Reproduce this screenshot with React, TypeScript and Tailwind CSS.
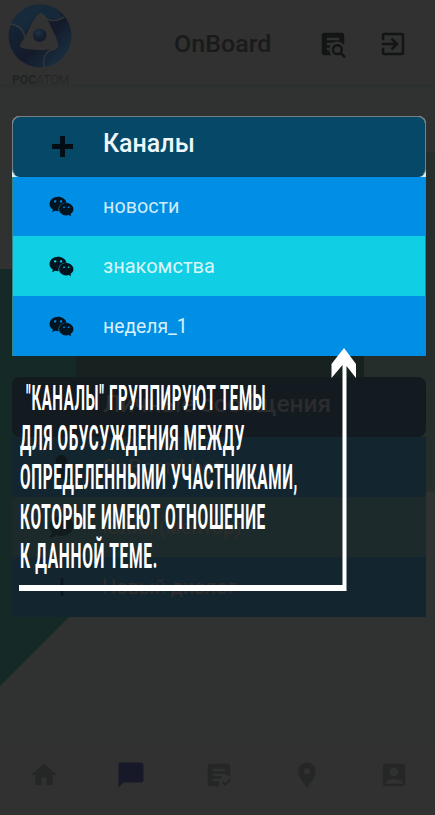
import { useLayoutEffect, useRef, useState } from "react";
import type { ReactNode } from "react";
import { MdAccountBox, MdChatBubble, MdExitToApp, MdHome, MdLocationOn } from "react-icons/md";
import { FaComment, FaUser, FaWeixin } from "react-icons/fa";

function FitText({ children, width, className = "" }: { children: ReactNode; width: number; className?: string }) {
  const ref = useRef<HTMLSpanElement>(null);
  const [scale, setScale] = useState(1);
  useLayoutEffect(() => {
    if (ref.current) setScale(width / ref.current.offsetWidth);
  }, [width]);
  return (
    <span ref={ref} className={`inline-block origin-left whitespace-nowrap ${className}`} style={{ transform: `scaleX(${scale})` }}>
      {children}
    </span>
  );
}

function Logo() {
  return (
    <svg viewBox="0 0 64 64" className="block h-16 w-16">
      <defs>
        <linearGradient id="blade" x1="0" y1="0" x2="1" y2="1">
          <stop offset="0" stopColor="#152a3b" />
          <stop offset="0.55" stopColor="#141a2a" />
          <stop offset="1" stopColor="#1b3648" />
        </linearGradient>
        <radialGradient id="core" cx="0.4" cy="0.3">
          <stop offset="0" stopColor="#1d3347" />
          <stop offset="1" stopColor="#151c2c" />
        </radialGradient>
      </defs>
      <circle cx="32" cy="32" r="31.5" fill="url(#blade)" />
      <path d="M8 12Q18 1 32 .5Q47 1 55 13Q45 20 33 9Q23 16 16 31Q12 21 3 20Z" fill="#172d3e" opacity=".7" />
      <path d="M33 9C37 10 40 16 43 23C47 31 51 38 50 44C46 46 41 45 36 46C29 46 18 46 12 43C12 38 16 36 19 29C23 21 27 11 33 9Z" fill="#323232" />
      <path d="M32 9Q43 22 56 13M17 33Q14 21 2 20M48 45Q34 46 36 63" fill="none" stroke="#343637" strokeWidth="1.3" />
      <circle cx="31.8" cy="31.3" r="6.7" fill="url(#core)" />
    </svg>
  );
}

function TextBoxSearch() {
  return (
    <svg viewBox="0 0 24 24" className="h-[30px] w-[30px]" fill="currentColor">
      <path d="M15.5,12C18,12 20,14 20,16.5C20,17.38 19.75,18.21 19.31,18.9L22.39,22L21,23.39L17.88,20.32C17.19,20.75 16.37,21 15.5,21C13,21 11,19 11,16.5C11,14 13,12 15.5,12M15.5,14A2.5,2.5 0 0,0 13,16.5A2.5,2.5 0 0,0 15.5,19A2.5,2.5 0 0,0 18,16.5A2.5,2.5 0 0,0 15.5,14M7,15V17H9C9.14,18.55 9.8,19.94 10.81,21H5C3.89,21 3,20.1 3,19V5C3,3.89 3.89,3 5,3H19A2,2 0 0,1 21,5V13.03C19.85,11.21 17.82,10 15.5,10C14.23,10 13.04,10.37 12.04,11H7V13H10C9.64,13.6 9.34,14.28 9.17,15H7M17,9V7H7V9H17Z" />
    </svg>
  );
}

function TextBoxCheck() {
  return (
    <svg viewBox="0 0 24 24" className="h-[30px] w-[30px]" fill="currentColor">
      <path d="M17 21L14.25 18L15.41 16.83L17 18.41L20.59 14.82L21.75 16.23L17 21M12.8 21H5C3.89 21 3 20.11 3 19V5C3 3.89 3.89 3 5 3H19C20.11 3 21 3.89 21 5V12.8C20.12 12.29 19.09 12 18 12L17 12.08V11H7V13H14.69C14 13.55 13.24 14.2 12.8 15H7V17H12.08L12 18C12 19.09 12.29 20.12 12.8 21M17 9V7H7V9H17Z" />
    </svg>
  );
}

function Plus() {
  return (
    <svg viewBox="0 0 21 21" className="h-[21px] w-[21px]" fill="currentColor">
      <path d="M8 0h5v8h8v5h-8v8H8v-8H0V8h8z" />
    </svg>
  );
}

function Row({ icon, label, width, className }: { icon: ReactNode; label: string; width: number; className: string }) {
  return (
    <div className={`flex items-center ${className}`}>
      <div className="flex w-[90px] shrink-0 justify-center pl-[9px]">{icon}</div>
      <FitText width={width} className="text-[20px] leading-6">{label}</FitText>
    </div>
  );
}

const wechat = <FaWeixin className="-ml-[3px] h-[25px] w-[25px] text-[#02141f]" />;

const note = [
  { text: "\"КАНАЛЫ\" ГРУППИРУЮТ ТЕМЫ", width: 240, pad: "pl-[6px]" },
  { text: "ДЛЯ ОБУСУЖДЕНИЯ МЕЖДУ", width: 225, pad: "" },
  { text: "ОПРЕДЕЛЕННЫМИ УЧАСТНИКАМИ,", width: 278, pad: "" },
  { text: "КОТОРЫЕ ИМЕЮТ ОТНОШЕНИЕ", width: 246, pad: "" },
  { text: "К ДАННОЙ ТЕМЕ.", width: 138, pad: "" },
];

export default function App() {
  return (
    <div className="relative flex h-[815px] w-[435px] flex-col overflow-hidden bg-[#303231] font-['Roboto',sans-serif]">
      <svg viewBox="0 0 435 815" className="absolute inset-0 h-[815px] w-[435px]">
        <path d="M364 152H435V492H364Z" fill="#262e2c" />
        <path d="M0 269H76V610L0 686Z" fill="#152a26" />
        <path d="M76 269H364V492H76Z" fill="#17211f" />
      </svg>

      <header className="relative flex h-[84px] shrink-0 bg-[#313131] text-[#191b1b] shadow-[0_1px_3px_rgba(20,30,28,0.25)]">
        <div className="w-[84px] pl-2 pt-1">
          <div className="h-[71px]"><Logo /></div>
          <div className="h-[10px] pl-1 text-[12px] leading-[10px]">
            <FitText width={57} className="text-[#202323]"><b>РОС</b><span className="font-light">АТОМ</span></FitText>
          </div>
        </div>
        <div className="w-[234px] pl-[90px] pt-7">
          <FitText width={97} className="text-[24px] font-medium leading-8">OnBoard</FitText>
        </div>
        <div className="flex gap-[30px] pt-[29px] text-[#131414]">
          <TextBoxSearch />
          <MdExitToApp className="h-[30px] w-[30px]" />
        </div>
      </header>

      <main className="relative flex grow flex-col px-3 pt-8">
        <section className="h-[240px] w-[414px]">
          <div className="h-[61px] rounded-t-[8px] bg-[#d4eeee]">
            <div className="flex h-[61px] items-center rounded-[8px] border border-[#777f84] border-b-[#064464] bg-[#064868]">
              <div className="flex w-[90px] justify-center pl-[9px] text-[#020d14]"><Plus /></div>
              <FitText width={92} className="-mt-1.5 text-[25px] font-medium leading-8 text-[#edf6fb]">Каналы</FitText>
            </div>
          </div>
          <div className="border-x border-[#31878c]">
            <Row icon={wechat} label="новости" width={76} className="h-[59px] bg-[#008fe5] pb-px text-[#d1ebfb]" />
            <Row icon={wechat} label="знакомства" width={112} className="h-[60px] bg-[#10cee4] text-[#d9f7fb]" />
            <Row icon={wechat} label="неделя_1" width={85} className="h-[60px] bg-[#008fe5] text-[#d7effc]" />
          </div>
        </section>

        <section className="mt-[21px] w-[414px] text-[#302c2b]">
          <div className="flex h-[60px] items-center rounded-[8px] bg-[#131b20] pl-[91px]">
            <FitText width={228} className="-mt-1.5 text-[24px] font-medium leading-8 text-[#2c2c2e]">Личные сообщения</FitText>
          </div>
          <Row icon={<FaUser className="h-[24px] w-[21px] text-[#10171b]" />} label="OnBoard-bot" width={119} className="h-[60px] bg-[#132630]" />
          <Row icon={<FaComment className="h-[24px] w-[25px] text-[#111c1e]" />} label="Юлия (ментор)" width={139} className="h-[60px] bg-[#1c2a2c]" />
          <Row icon={<svg viewBox="0 0 20 20" className="h-5 w-5"><path d="M10 1V19M2 10H18" stroke="#0c151b" strokeWidth="2.5" /></svg>} label="Новый диалог" width={134} className="h-[60px] bg-[#132630]" />
        </section>
      </main>

      <footer className="relative grid h-[69px] w-[438px] shrink-0 grid-cols-5 justify-items-center bg-[#313131] pt-[14px] text-[#242726]">
        <MdHome className="h-[30px] w-[30px]" />
        <MdChatBubble className="h-[30px] w-[30px] text-[#171929]" />
        <TextBoxCheck />
        <MdLocationOn className="h-[30px] w-[30px]" />
        <MdAccountBox className="h-[30px] w-[30px]" />
      </footer>

      <div className="absolute left-[20px] top-[379px] text-white">
        {note.map((line) => (
          <div key={line.text} className={`h-[39.5px] ${line.pad}`}>
            <FitText width={line.width} className="text-[35px] font-bold leading-10 tracking-[1.5px]">{line.text}</FitText>
          </div>
        ))}
      </div>
      <svg viewBox="0 0 435 815" className="absolute inset-0 h-[815px] w-[435px]">
        <path d="M19 585H342.5V365L331.5 378V364L344 348L356 364V378L346.5 366V591H19Z" fill="#fff" />
      </svg>
    </div>
  );
}
